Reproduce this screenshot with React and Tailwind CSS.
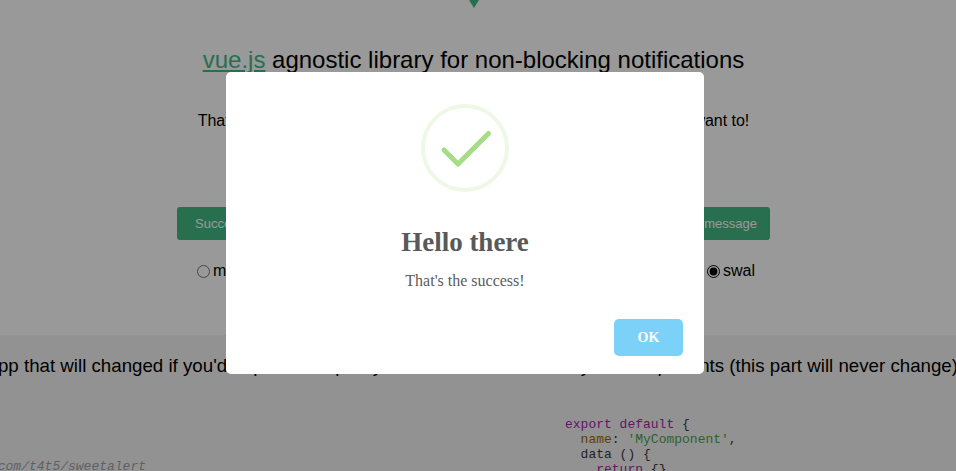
export default function App() {
  return (
    <div className="relative w-[956px] h-[471px] overflow-hidden bg-white text-black font-['Liberation_Sans',Arial,sans-serif]">
      <div className="flex flex-col h-full">
        <div className="h-[335px] shrink-0 flex flex-col items-center w-[947px]">
          <svg className="w-[10px] h-[8px] shrink-0" viewBox="0 0 10 8" aria-hidden="true">
            <polygon points="0,0 10,0 5,8" fill="#42b983" />
          </svg>
          <h2 className="mt-[38px] text-[24px] leading-[28px] whitespace-nowrap">
            <a className="text-[#42b983] underline" href="#">vue.js</a> agnostic library for non-blocking notifications
          </h2>
          <p className="mt-[37px] text-[16px] leading-[20px] whitespace-nowrap tracking-[-0.025px]">That's a notification library that lets you notify your users however you want to!</p>
          <div className="mt-[76px] flex justify-between w-[593px] text-[13px]">
            <button className="h-[33px] pl-[18px] pr-[13px] rounded-[3px] bg-[#42b983] text-white">Success message</button>
            <button className="h-[33px] pl-[18px] pr-[13px] rounded-[3px] bg-[#42b983] text-white">Info message</button>
            <button className="h-[33px] pl-[18px] pr-[13px] rounded-[3px] bg-[#42b983] text-white">Warning message</button>
          </div>
          <div className="mt-[21px] ml-[5px] flex justify-between w-[558px] text-[16px] leading-[20px]">
            <label className="flex items-center gap-[3px]"><input type="radio" name="lib" />message</label>
            <label className="flex items-center gap-[3px]"><input type="radio" name="lib" />toast</label>
            <label className="flex items-center gap-[3px]"><input type="radio" name="lib" defaultChecked className="accent-black" />swal</label>
          </div>
        </div>
        <div className="flex-1 flex flex-col bg-[#f4f4f4]">
          <div className="mt-[20px] flex justify-end w-[958px] overflow-hidden">
            <p className="shrink-0 text-[18.72px] leading-[22px] whitespace-nowrap">This is the part of the app that will changed if you'd depend into pretty alerts from another the your components (this part will never change)</p>
          </div>
          <div className="mt-[40px] flex font-['Liberation_Mono','Courier_New',monospace] text-[13px] leading-[15px] whitespace-pre text-[#383a42]">
            <div className="w-[565px] shrink-0 flex flex-col pt-[42px]">
              <div className="w-[146px] flex justify-end overflow-hidden italic text-[#a0a1a7]">// https://github.com/t4t5/sweetalert</div>
            </div>
            <div>
              <div><span className="text-[#a626a4]">export default</span> {"{"}</div>
              <div>  <span className="text-[#986801]">name</span>: <span className="text-[#50a14f]">'MyComponent'</span>,</div>
              <div>  data () {"{"}</div>
              <div>    <span className="text-[#a626a4]">return</span> {"{}"}</div>
            </div>
          </div>
        </div>
      </div>
      <div className="absolute inset-0 bg-black/40 pl-[226px] pt-[72px]">
        <div className="w-[478px] h-[302px] rounded-[5px] bg-white flex flex-col items-center font-['Liberation_Serif','Times_New_Roman',serif]">
          <div className="mt-[32px] w-[88px] h-[88px] rounded-full border-4 border-[#edf8e7] flex items-center justify-center">
            <svg className="w-[60px] h-[50px]" viewBox="0 0 60 50" aria-hidden="true">
              <path d="M9 27 L23 41 L53.5 10.5" fill="none" stroke="#a5dc86" strokeWidth="5" strokeLinecap="round" strokeLinejoin="round" />
            </svg>
          </div>
          <h2 className="mt-[34px] text-[27px] leading-[32px] font-bold text-[#595959] whitespace-nowrap">Hello there</h2>
          <p className="mt-[13px] text-[16px] leading-[20px] text-[#5c5c5c]">That's the success!</p>
          <div className="self-end mt-[28px] mr-[21px]">
            <button className="w-[69px] h-[37px] rounded-[5px] bg-[#7cd1f9] text-white font-bold text-[14px] leading-[37px]">OK</button>
          </div>
        </div>
      </div>
    </div>
  );
}
